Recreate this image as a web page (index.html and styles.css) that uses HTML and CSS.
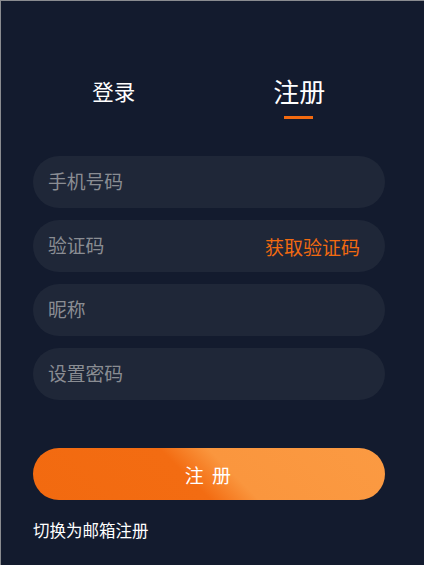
FILE: index.html
```html
<!DOCTYPE html>
<html lang="zh-CN">
<head>
<meta charset="utf-8">
<title>注册</title>
<link rel="stylesheet" href="styles.css">
</head>
<body>
<div class="page">
  <div class="tabs">
    <div class="tab">登录</div>
    <div class="tab active">注册<span class="bar"></span></div>
  </div>
  <form class="form">
    <div class="field"><input class="input" placeholder="手机号码"></div>
    <div class="field"><input class="input" placeholder="验证码"><span class="code">获取验证码</span></div>
    <div class="field"><input class="input" placeholder="昵称"></div>
    <div class="field"><input class="input" type="password" placeholder="设置密码"></div>
    <button type="button" class="submit">注 册</button>
  </form>
  <div class="switch">切换为邮箱注册</div>
</div>
</body>
</html>
```
FILE: styles.css
```css
html, body {
  margin: 0;
  padding: 0;
  height: 100%;
}
body {
  background: #131b2e;
  font-family: "Noto Sans CJK SC", "Noto Sans", sans-serif;
  border-top: 1px solid #8a8c90;
  border-left: 1px solid #8a8c90;
  box-sizing: border-box;
}
.page {
  padding: 0 39px 0 32px;
}
.tabs {
  display: grid;
  grid-template-columns: 1fr 1fr;
  margin: 0 -7px 0 -12px;
  padding-top: 72px;
  height: 48px;
}
.tab {
  position: relative;
  text-align: center;
  color: #ffffff;
  font-size: 21.5px;
  line-height: 36px;
}
.tab.active {
  font-size: 26px;
}
.bar {
  position: absolute;
  left: 50%;
  top: 43px;
  width: 29px;
  height: 3px;
  margin-left: -15px;
  background: #f26a10;
}
.form {
  margin-top: 35px;
  display: flex;
  flex-direction: column;
  gap: 12px;
}
.field {
  display: flex;
  align-items: center;
  height: 52px;
  border-radius: 26px;
  background: #1f2738;
  padding: 0 25px 0 15px;
}
.input {
  flex: 1;
  min-width: 0;
  border: 0;
  outline: 0;
  background: transparent;
  font-family: inherit;
  font-size: 18.8px;
  color: #ffffff;
  padding: 0 0 3px;
}
.input::placeholder {
  color: #8a8d93;
}
.code {
  color: #f26a10;
  font-size: 19px;
  margin-top: 1px;
}
.submit {
  margin-top: 36px;
  height: 52px;
  border: 0;
  border-radius: 26px;
  background: linear-gradient(45deg, #f26a10 0%, #f36c12 44%, #fa963e 56%, #fb9a42 100%);
  color: #ffffff;
  font-family: inherit;
  font-size: 19px;
  letter-spacing: 2px;
  padding: 0;
}
.switch {
  margin-top: 18px;
  color: #ffffff;
  font-size: 16.5px;
  line-height: 24px;
}
```
